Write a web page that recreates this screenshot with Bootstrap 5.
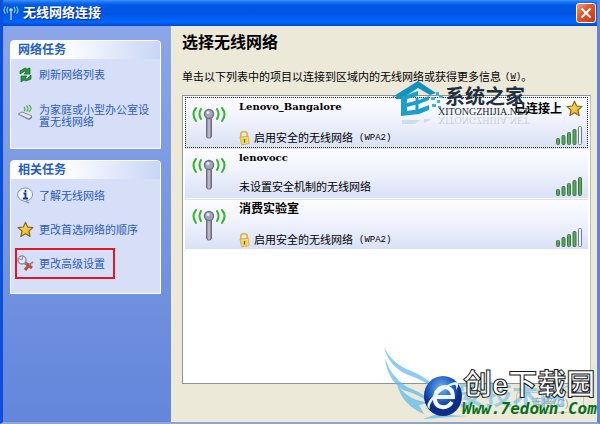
<!DOCTYPE html>
<html lang="zh-CN">
<head>
<meta charset="utf-8">
<meta name="viewport" content="width=device-width, initial-scale=1">
<title>无线网络连接</title>
<link rel="stylesheet" href="https://cdn.jsdelivr.net/npm/bootstrap@5.3.0/dist/css/bootstrap.min.css">
<style>
body{font-family:"Liberation Sans","Noto Sans CJK SC",sans-serif;font-size:11px;line-height:12px;color:#000;background:#ece9d8}
.win{border:solid #0a50dc;border-width:0 3px 2px;border-right-color:#5f86d8;border-bottom-color:#8fa6cc}
.titlebar{height:26px;background:linear-gradient(#3c96ff 0,#1a74f5 2px,#0058e6 5px,#0056e4 14px,#0166ff 22px,#0148c8 26px);padding:0 1px 0 0}
.titlebar h1{font-size:13px;line-height:16px;font-weight:700;color:#fff;text-shadow:1px 1px 1px #0a2a80}
.close-x{width:20px;height:20px;border:1px solid #fff;border-radius:3px;background:linear-gradient(135deg,#f0a088,#e2572f 40%,#c43c14)}
.side{width:169px;background:linear-gradient(#8ba6e8,#6386dc);padding:14px 10px 0 7px;border-right:1px solid #f2f1ea}
.task-box{border:1px solid #fff;border-radius:4px 4px 0 0;background:#d6dff7;margin-bottom:11px}
.task-box h2{font-size:12px;line-height:18px;font-weight:700;color:#215dc6;margin:0;padding-left:7px;background:linear-gradient(90deg,#fff 35%,#c8d5f5);border-radius:3px 3px 0 0}
.task-box nav{padding:7px 0 20px;gap:17px}
.task-box nav.related{padding:8px 0 14px}
.task-box a{color:#2a5cbe;gap:5px;padding-left:6px;padding-right:4px}
.task-box a svg{width:17px;height:17px;flex:none}
.task-box a.marked{border:2px solid #e01820;margin:-7px 0 0 4px;width:100px;padding:5px 0;gap:5px}
.main{padding:8px 6px 0 10px}
.main h2{font-size:16px;line-height:18px;font-weight:700;margin:0}
.intro{margin:17px 0 10px;line-height:16px}
.net-list{background:#fff;border:1px solid #8b9496;border-right-color:#b4bec0;height:289px;padding:1px 2px 0}
.net{background:linear-gradient(#fdfdff,#eef1fc 50%,#d9e1f6);height:51px;color:#000;padding:2px 4px 1px 5px;gap:12px;width:100%;border:1px solid transparent}
.net.on{border:1px dotted #222}
.radio-ic{width:36px;height:36px;flex:none}
.ssid{font-size:12px;line-height:14px;font-weight:700}
.latin{font-family:"DejaVu Serif",serif;font-size:10px}
.key,.enc{font-family:"Liberation Mono",monospace;font-size:9px}
.key{line-height:10px}
.enc{margin-left:6px}
.bars{width:27px;height:20px}
.foot{height:36px;padding:8px 7px 0 0}
.go{width:68px;height:21px;border:1px solid #c9c7ba;border-radius:3px;background:#efede2;color:#aaa99b;font-size:11px}
.wm-house{left:388px;top:78px;width:56px;height:50px;pointer-events:none}
.wm-name{left:445px;top:85px;font-size:20px;line-height:24px;font-weight:700;color:#203040;pointer-events:none}
.wm-url{left:438px;top:106px;font-family:"Liberation Serif",serif;font-size:10px;line-height:12px;color:#202830;pointer-events:none}
.wm-mirror{top:114px;transform:scaleY(-1);opacity:.18}
.wm-wing{left:380px;top:344px;width:216px;height:76px;pointer-events:none}
.wm-back{left:431px;top:380px;font-size:27px;line-height:32px;font-weight:700;color:#4db3f0;opacity:.5;white-space:nowrap;pointer-events:none}
.wm-logo{left:423px;top:375px;width:40px;height:42px;pointer-events:none}
.wm-site{left:463px;top:368px;font-size:29px;line-height:34px;font-weight:700;color:#fff;-webkit-text-stroke:1px #161616;white-space:nowrap;pointer-events:none}
.wm-www{left:462px;top:400px;font-family:"DejaVu Sans Mono",monospace;font-size:16px;line-height:18px;font-weight:700;font-style:italic;color:#087018;pointer-events:none}
</style>
<script src="https://cdn.jsdelivr.net/npm/bootstrap@5.3.0/dist/js/bootstrap.bundle.min.js"></script>
</head>
<body>
<svg class="position-absolute" width="0" height="0" aria-hidden="true">
<defs>
<linearGradient id="metal"><stop stop-color="#74748a"/><stop offset=".5" stop-color="#c9c9da"/><stop offset="1" stop-color="#666678"/></linearGradient>
<linearGradient id="gold" x2="1" y2="1"><stop stop-color="#fff27a"/><stop offset="1" stop-color="#eaa010"/></linearGradient>
</defs>
<symbol id="antenna" viewBox="0 0 36 36">
<rect x="15.500" y="13" width="5" height="21" rx="2" fill="url(#metal)" stroke="#6c6c7c" stroke-width="1"/>
<circle cx="18" cy="10" r="4.500" fill="#a3a6ba" stroke="#70748a" stroke-width="1.500"/><circle cx="17" cy="8.500" r="1.500" fill="#e8eaf6"/>
<g fill="none" stroke="#35b52c" stroke-width="2" stroke-linecap="round"><path d="M10 5q-3 5 0 10M26 5q3 5 0 10M5 4q-5 6 0 13M31 4q5 6 0 13"/></g>
</symbol>
<symbol id="star" viewBox="0 0 17 17"><path d="M8.500 1.300l2.100 4.700 5.300.6-4 3.500 1.200 5.400-4.600-2.800-4.600 2.800L5.100 10 1 6.600 6.400 6z" fill="url(#gold)" stroke="#84681c" stroke-width="1.200" stroke-linejoin="round"/></symbol>
<symbol id="lock" viewBox="0 0 12 16"><path d="M2 8V4q0-3 3.500-3T9 4v3" fill="none" stroke="#dcb84e" stroke-width="2"/><path d="M1 7l9-1 1 8-8 1.500z" fill="#f8d765" stroke="#cda038" stroke-width=".8"/><path d="M6 9v4" stroke="#80601a" stroke-width="1.500"/></symbol>
<symbol id="bar4" viewBox="0 0 27 20"><g fill="#45b649" stroke="#50685a"><rect x=".5" y="12.500" width="3" height="6" rx="1"/><rect x="6" y="9.500" width="3" height="9" rx="1"/><rect x="11.500" y="6.500" width="3" height="12" rx="1"/><rect x="17" y="3.500" width="3" height="15" rx="1"/><rect x="22.500" y=".5" width="3" height="18" rx="1" fill="#f1f1fa" stroke="#77778a"/></g></symbol>
<symbol id="bar5" viewBox="0 0 27 20"><g fill="#45b649" stroke="#50685a"><rect x=".5" y="12.500" width="3" height="6" rx="1"/><rect x="6" y="9.500" width="3" height="9" rx="1"/><rect x="11.500" y="6.500" width="3" height="12" rx="1"/><rect x="17" y="3.500" width="3" height="15" rx="1"/><rect x="22.500" y=".5" width="3" height="18" rx="1"/></g></symbol>
</svg>
<div class="win position-relative d-flex flex-column min-vh-100">
<header class="titlebar d-flex align-items-center">
<svg width="16" height="16" viewBox="0 0 16 16" aria-hidden="true"><path d="M8 7v8" stroke="#8ea7dc" stroke-width="2"/><circle cx="8" cy="5" r="1.800" fill="#c6d2ee"/><g fill="none" stroke="#7ed994" stroke-width="1.200"><path d="M5 2q-2 3 0 6M11 2q2 3 0 6M2.500 1.500q-3 4 0 7M13.500 1.500q3 4 0 7"/></g></svg>
<h1 class="mb-0 ms-1 flex-grow-1">无线网络连接</h1>
<button type="button" class="close-x p-0 d-flex align-items-center justify-content-center" aria-label="关闭"><svg width="12" height="12" viewBox="0 0 12 12"><path d="M1.500 1.500l9 9M10.500 1.500l-9 9" stroke="#fff" stroke-width="2"/></svg></button>
</header>
<div class="d-flex flex-grow-1">
<aside class="side flex-shrink-0">
<section class="task-box">
<h2>网络任务</h2>
<nav class="d-flex flex-column">
<a href="#" class="d-flex text-decoration-none align-items-center"><svg viewBox="0 0 17 17"><g fill="#27983a" stroke="#116022" stroke-width=".7"><path d="M3 8V5l5-3 2 1 3-1v6L7 8l2-2-1-1z"/><path d="M14 9v4l-5 2-2-1-3 2v-6l6 0-2 2 2 1z"/></g></svg><span>刷新网络列表</span></a>
<a href="#" class="d-flex text-decoration-none pt-1"><svg viewBox="0 0 17 17"><path d="M1 10l4-2 10 4-3 3z" fill="#e6e6ec" stroke="#8a8a98"/><path d="M12 15l3-3v2l-3 2L1 11" fill="#777a88"/><g fill="none" stroke="#4bb546" stroke-width="1.200"><path d="M7 7q2-2 0-4M9.500 7.500q3-3 0-6M12 8q4-4 0-7"/></g></svg><span>为家庭或小型办公室设置无线网络</span></a>
</nav>
</section>
<section class="task-box">
<h2>相关任务</h2>
<nav class="related d-flex flex-column">
<a href="#" class="d-flex text-decoration-none align-items-center"><svg viewBox="0 0 17 17"><path d="M8 1a7 6.500 0 1 1 1 13l3 2-6-2.200A7 6.500 0 0 1 8 1z" fill="#f4f8ff" stroke="#7c92b8"/><path d="M8.500 3v2M6.500 6.500h2V11M6 11.500h5" stroke="#16388a" stroke-width="1.800" fill="none"/></svg><span>了解无线网络</span></a>
<a href="#" class="d-flex text-decoration-none align-items-center"><svg><use href="#star"/></svg><span>更改首选网络的顺序</span></a>
<a href="#" class="d-flex text-decoration-none align-items-center marked"><svg viewBox="0 0 17 17"><path d="M7 7l8 6M13 9l-5 6" stroke="#c04a32" stroke-width="3"/><path d="M7 7l3 2" stroke="#777b8a" stroke-width="3"/><circle cx="5" cy="5" r="4" fill="#e9eaf2" stroke="#8a8d9c" stroke-width="1.500"/><path d="M1 3l4 2 1-4" fill="#d6dff7" stroke="#8a8d9c"/><path d="M12 10l4-3" stroke="#878c9e" stroke-width="2"/></svg><span>更改高级设置</span></a>
</nav>
</section>
</aside>
<main class="main flex-grow-1">
<h2>选择无线网络</h2>
<p class="intro d-flex align-items-center">单击以下列表中的项目以连接到区域内的无线网络或获得更多信息<span class="key ms-1">(<u>W</u>)</span>。</p>
<div class="net-list">
<button type="button" class="net on d-flex text-start"><svg class="radio-ic mt-1"><use href="#antenna"/></svg>
<span class="d-flex flex-column justify-content-between align-self-stretch flex-grow-1"><span class="ssid latin">Lenovo_Bangalore</span><span class="d-flex align-items-center"><svg class="me-1" width="11" height="16"><use href="#lock"/></svg>启用安全的无线网络<span class="enc">(WPA2)</span></span></span>
<span class="d-flex flex-column align-items-end justify-content-between align-self-stretch"><span class="d-flex align-items-center gap-1 ssid">已连接上<svg width="17" height="17"><use href="#star"/></svg></span><svg class="bars"><use href="#bar4"/></svg></span></button>
<button type="button" class="net d-flex text-start"><svg class="radio-ic mt-1"><use href="#antenna"/></svg>
<span class="d-flex flex-column justify-content-between align-self-stretch flex-grow-1"><span class="ssid latin">lenovocc</span><span class="pb-1">未设置安全机制的无线网络</span></span><svg class="bars align-self-end"><use href="#bar5"/></svg></button>
<button type="button" class="net d-flex text-start"><svg class="radio-ic mt-1"><use href="#antenna"/></svg>
<span class="d-flex flex-column justify-content-between align-self-stretch flex-grow-1"><span class="ssid">消费实验室</span><span class="d-flex align-items-center"><svg class="me-1" width="11" height="16"><use href="#lock"/></svg>启用安全的无线网络<span class="enc">(WPA2)</span></span></span><svg class="bars align-self-end"><use href="#bar4"/></svg></button>
</div>
<div class="foot d-flex justify-content-end"><button type="button" class="go p-0">连接(C)</button></div>
</main>
</div>
</div>
<svg class="wm-house position-absolute" viewBox="0 0 56 50" aria-hidden="true"><path d="M1 21L30 3l18 12-6 2-12-7-17 11h-5v-3z" fill="#1691bd"/><path d="M13 19l17-6v5l-11 3v4l12-3 10-4v4l-10 4-12 3v4l12-2 10-4v5l-10 4-18 2z" fill="#1c9fcb"/><path d="M29 20v14" stroke="#1c9fcb" stroke-width="3"/><g fill="#39b5d8"><path d="M43 19h4v3h-4zM48 14h3v3h-3zM49 22h3v3h-3zM44 26h4v3h-4zM51 18h4v2h-4zM50 28h3v2h-3z"/></g><path d="M14 42h18l-5 4H14zM36 41h8l-8 4z" fill="#8bb8d2" opacity=".35"/></svg>
<div class="wm-name position-absolute">系统之家</div>
<div class="wm-url position-absolute">XITONGZHIJIA.NET</div>
<div class="wm-url wm-mirror position-absolute" aria-hidden="true">XITONGZHIJIA.NET</div>
<svg class="wm-wing position-absolute" viewBox="0 0 216 76" aria-hidden="true"><g fill="#58b7ef" opacity=".7"><path d="M4 3q8 17 27 24 22 9 30 25-8-12-30-20Q9 24 4 3zM5 14q5 18 22 29 21 8 26 18-12-10-30-15Q7 35 5 14zM17 40q8 12 20 16l12 3-10 2 5 9Q22 61 17 40zM43 63q20 9 45 9l-45 3 14-5z"/><path d="M215 22q-9 13-25 19l-8 3q20-2 33-22zM208 38q-9 11-24 14 14 1 24-14z"/></g></svg>
<div class="wm-back position-absolute">爱安技术网</div>
<svg class="wm-logo position-absolute" viewBox="0 0 40 42" aria-hidden="true"><defs><radialGradient id="orb" cx=".45" cy=".3"><stop stop-color="#74b5f2"/><stop offset=".6" stop-color="#2568ca"/><stop offset="1" stop-color="#0a2e88"/></radialGradient></defs><ellipse cx="20" cy="21" rx="19" ry="20" fill="url(#orb)"/><path d="M29 27q-4 6-10 5-8-1-7-11 2-9 10-9 8 1 8 10H13" fill="none" stroke="#f4faff" stroke-width="4"/><path d="M7 34Q0 31 12 19 23 9 32 7q6 0 1 8 1-6-3-5-9 3-17 11Q5 30 7 34z" fill="#e6f3ff"/></svg>
<div class="wm-site position-absolute">创e下载园</div>
<div class="wm-www position-absolute">Www.7edown.Com</div>
</body>
</html>
